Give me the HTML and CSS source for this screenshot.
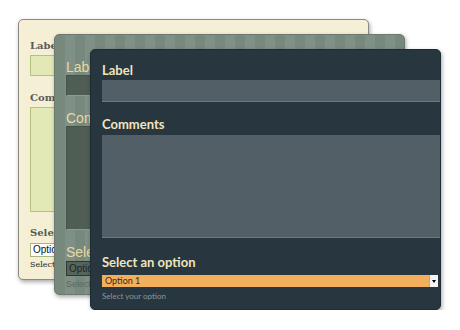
FILE: index.html
```html
<!DOCTYPE html>
<html lang="en">
<head>
    <meta charset="UTF-8">
    <title>Form Themes</title>
    <link rel="stylesheet" href="styles.css">
</head>
<body>
    <div class="stack">
        <!-- theme 1: cream -->
        <form class="card cream">
            <label>Label</label>
            <div class="input"></div>
            <label>Comments</label>
            <div class="textarea"></div>
            <label>Select an option</label>
            <div class="select">Option 1</div>
            <p class="help">Select your option</p>
        </form>

        <!-- theme 2: sage -->
        <form class="card sage">
            <label>Label</label>
            <div class="input"></div>
            <label>Comments</label>
            <div class="textarea"></div>
            <label>Select an option</label>
            <div class="select">Option 1</div>
            <p class="help">Select your option</p>
        </form>

        <!-- theme 3: dark -->
        <form class="card dark">
            <label>Label</label>
            <div class="input"></div>
            <label>Comments</label>
            <div class="textarea"></div>
            <label>Select an option</label>
            <div class="select">Option 1<span class="arrow"></span></div>
            <p class="help">Select your option</p>
        </form>
    </div>
</body>
</html>
```

FILE: styles.css
```css
body { margin: 0; background: #fff; }
.stack { display: grid; padding: 19px 0 0 18px; }
.card { grid-area: 1 / 1; width: 351px; height: 261px; box-sizing: border-box; overflow: hidden; border-radius: 5px; display: flex; flex-direction: column; align-items: flex-start; box-shadow: 1px 2px 4px rgba(0,0,0,0.35); }
.card label { display: block; white-space: nowrap; }
.card .input, .card .textarea { width: 400px; box-sizing: border-box; }
.card .help { margin: 0; white-space: nowrap; }

/* cream */
.cream { background: #f4efd5; border: 1px solid #8a8a80; padding: 20px 0 0 11px; font-family: "DejaVu Serif", Georgia, serif; }
.cream label { font-size: 10px; font-weight: bold; color: #5a5a55; line-height: 12px; }
.cream .input { height: 21px; margin: 3px 0 16px; background: #e2e8b6; border: 1px solid #b3c27d; }
.cream .textarea { height: 105px; margin: 3px 0 15px; background: #e2e8b6; border: 1px solid #b3c27d; }
.cream .select { width: 120px; height: 12px; margin-top: 4px; background: #fff; border: 1px solid #a9b77a; font: 10px/12px "Liberation Sans", Arial, sans-serif; color: #111; padding-left: 2px; }
.cream .help { font-size: 8px; color: #222; margin-top: 3px; }

/* sage */
.sage { margin: 15px 0 0 36px; border: 1px solid #6c7a72; padding: 24px 0 0 11px; font-family: "Liberation Sans", Arial, sans-serif; background: repeating-linear-gradient(90deg, #77887d 0 10px, #7f9186 10px 20px); }
.sage label { font-size: 14px; color: #ead9a2; line-height: 16px; }
.sage .input { height: 21px; margin: 0 0 14px; background: #4f5d55; border: 1px solid #45524b; border-bottom-color: #8d9c92; }
.sage .textarea { height: 104px; margin: 0 0 14px; background: #4f5d55; border: 1px solid #45524b; border-bottom-color: #8d9c92; }
.sage .select { width: 120px; height: 13px; margin-top: 1px; background: #56645c; border: 1px solid #2e3833; font-size: 10px; line-height: 13px; color: #1d2722; padding-left: 2px; }
.sage .help { font-size: 9px; color: #5a685f; margin-top: 3px; }

/* dark */
.dark { margin: 30px 0 0 72px; background: #27363f; border: 1px solid #1f2b32; padding: 12px 0 0 11px; font-family: "Lato", "DejaVu Sans", sans-serif; }
.dark label { font-size: 13px; font-weight: bold; color: #f0e4be; line-height: 16px; }
.dark .input { height: 22px; margin: 2px 0 14px; background: #525f66; border-bottom: 1px solid #6b787e; }
.dark .textarea { height: 103px; margin: 3px 0 16px; background: #525f66; border-bottom: 1px solid #6b787e; }
.dark .select { position: relative; width: 336px; height: 12px; margin-top: 5px; background: #f2b05c; box-sizing: border-box; font-size: 9px; line-height: 12px; color: #3a2a14; padding-left: 3px; }
.dark .arrow { position: absolute; right: 0; top: 0; width: 9px; height: 12px; background: #f4f4f4; border-left: 1px solid #aaa; box-sizing: border-box; }
.dark .arrow::after { content: ""; position: absolute; left: 2px; top: 5px; border: 2px solid transparent; border-top: 3px solid #000; }
.dark .help { font-size: 8px; color: #8c979c; margin-top: 4px; }
```
